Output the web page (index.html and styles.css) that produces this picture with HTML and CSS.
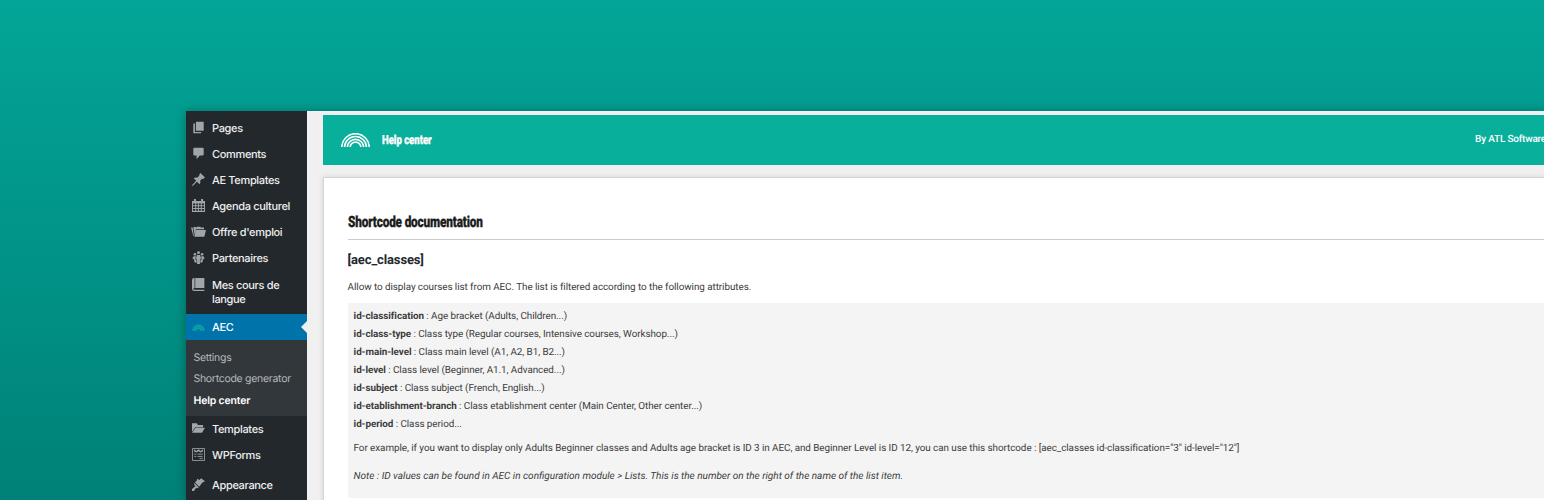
FILE: index.html
```html
<!DOCTYPE html>
<html lang="en">
<head>
<meta charset="utf-8">
<title>Help center</title>
<link rel="stylesheet" href="styles.css">
</head>
<body>
<div class="window">
  <nav class="sidebar">
    <ul class="menu">
      <li class="item"><svg class="icon" viewBox="0 0 20 20"><path d="M6 1h12v14H6zM2 4h2.500v13H14v2H2z"/></svg><span>Pages</span></li>
      <li class="item"><svg class="icon" viewBox="0 0 20 20"><path d="M4 1h12q2 0 2 2v8q0 2-2 2h-4l-5 6v-6H4q-2 0-2-2V3q0-2 2-2z"/></svg><span>Comments</span></li>
      <li class="item"><svg class="icon" viewBox="0 0 20 20"><path d="M11 2.500L13 0l7 7-2.500 2c-.9.200-1.500 0-2-.2l-3 3.200c.8 2.200.4 3.900-1 5.400l-3.800-3.900L1 20l-1-1 6.500-7-3.900-3.800c1.600-1.400 3.400-1.800 5.500-1L11.300 4z"/></svg><span>AE Templates</span></li>
      <li class="item"><svg class="icon" viewBox="0 0 20 20"><path fill-rule="evenodd" d="M0 3h3V0h3v3h8V0h3v3h3v17H0zm1.500 4v2.700H5V7zm5 0v2.700H9.300V7zm4.200 0v2.700h2.800V7zm4.300 0v2.700h3.500V7zm-13.500 4v2.700H5V11zm5 0v2.700H9.300V11zm4.200 0v2.700h2.800V11zm4.300 0v2.700h3.500V11zm-13.500 4.500v2.700H5v-2.700zm5 0v2.700H9.300v-2.700zm4.200 0v2.700h2.800v-2.700zm4.300 0v2.700h3.500v-2.700z"/></svg><span>Agenda culturel</span></li>
      <li class="item"><svg class="icon icon-wide" viewBox="0 0 23 20"><path d="M0 4h2.500l2 13H3.500zM3.500 4L6 2.500 8 4l1.500-1.500H14L15 4h5v2.500H7.500L5.500 15zM7.500 7.500H23L20.500 18H5z"/></svg><span>Offre d'emploi</span></li>
      <li class="item"><svg class="icon" viewBox="0 0 20 20"><circle cx="10" cy="2.500" r="2.300"/><circle cx="4.500" cy="5" r="2"/><circle cx="15.500" cy="5" r="2"/><path d="M7.500 6h5l1.500 6-1.800 1.500V20H7.800v-6.500L6 12zM2.500 8H6L5 12.500l2 1.700V18.500L3.500 17v-3.500L.5 11zM17.500 8H14l1 4.500-2 1.700v4.300l3.500-1.500v-3.500l3-2.500z"/></svg><span>Partenaires</span></li>
      <li class="item item-tall"><svg class="icon" viewBox="0 0 20 20"><path d="M5 0h14v15.500H5zM3 0h1v15.500Q2 15.700 2 17t2 1.200h15V20H3.500Q0 20 0 16.500V3q0-3 3-3z"/></svg><span>Mes cours de<br>langue</span></li>
      <li class="item item-current"><svg class="icon icon-arc" viewBox="0 0 28 14"><path class="arc-soft" d="M3 14a11 11 0 0 1 22 0"/><path class="arc-core" d="M8 14a6 6 0 0 1 12 0"/></svg><span>AEC</span></li>
    </ul>
    <ul class="submenu">
      <li>Settings</li>
      <li>Shortcode generator</li>
      <li class="active">Help center</li>
    </ul>
    <ul class="menu menu-end">
      <li class="item"><svg class="icon" viewBox="0 0 20 20"><path d="M0 2h7.500L9 4.500h8V8H5l-5 7zM5.500 8.700H20l-4.500 7.800H0z"/></svg><span>Templates</span></li>
      <li class="item"><svg class="icon icon-form" viewBox="0 0 20 20"><path class="line" d="M.7.700h18.600v18.600H.7zM3.500 9.500h3M8.500 9.500h8M3.500 13h3M8.500 13h8M11.500 16.300h5"/><path d="M3 2l3.500 2.500L10 2l3.500 2.500L17 2v3l-3.500 2L10 5 6.500 7 3 5z"/></svg><span>WPForms</span></li>
      <li class="item item-gap"><svg class="icon" viewBox="0 0 20 20"><path d="M8 1l3.500 2L14 .5 20 5l-4 2-5 6.500L4.500 6.500 7.500 4zM3.800 7.500l6.500 7-2.200 1.300-1.700-.9L3 20H0v-3l5-4.300-1.800-3.200z"/></svg><span>Appearance</span></li>
    </ul>
  </nav>
  <main class="content">
    <header class="banner">
      <svg class="logo" viewBox="0 0 28 14"><path d="M.7 14a13.300 13.300 0 0 1 26.600 0M3.400 14a10.600 10.600 0 0 1 21.200 0M6.100 14a7.900 7.900 0 0 1 15.800 0M8.800 14a5.200 5.200 0 0 1 10.400 0"/></svg>
      <span class="banner-title"><span>Help center</span></span>
      <span class="credit">By ATL Software</span>
    </header>
    <section class="panel">
      <h1 class="title"><span>Shortcode documentation</span></h1>
      <h2 class="tag">[aec_classes]</h2>
      <p class="intro">Allow to display courses list from AEC. The list is filtered according to the following attributes.</p>
      <div class="doc">
        <ul class="attrs">
          <li><b>id-classification</b> : Age bracket (Adults, Children...)</li>
          <li><b>id-class-type</b> : Class type (Regular courses, Intensive courses, Workshop...)</li>
          <li><b>id-main-level</b> : Class main level (A1, A2, B1, B2...)</li>
          <li><b>id-level</b> : Class level (Beginner, A1.1, Advanced...)</li>
          <li><b>id-subject</b> : Class subject (French, English...)</li>
          <li><b>id-etablishment-branch</b> : Class etablishment center (Main Center, Other center...)</li>
          <li><b>id-period</b> : Class period...</li>
        </ul>
        <p class="example">For example, if you want to display only Adults Beginner classes and Adults age bracket is ID 3 in AEC, and Beginner Level is ID 12, you can use this shortcode : [aec_classes id-classification="3" id-level="12"]</p>
        <p class="note">Note : ID values can be found in AEC in configuration module &gt; Lists. This is the number on the right of the name of the list item.</p>
      </div>
    </section>
  </main>
</div>
</body>
</html>
```
FILE: styles.css
```css
* { box-sizing: border-box; }
html, body { height: 100%; }
body {
  margin: 0;
  overflow: hidden;
  background: linear-gradient(#03a598, #008177);
  font-family: Roboto, sans-serif;
  color: #3c3c3c;
  text-rendering: geometricPrecision;
}
ul, p, h1, h2 { margin: 0; padding: 0; list-style: none; }
.window {
  display: flex;
  height: 389px;
  margin: 111px 0 0 186px;
  background: #f0f0f0;
  box-shadow: 0 0 10px rgba(0, 0, 0, .3);
}
.sidebar {
  flex: none;
  width: 121.400px;
  height: 389px;
  overflow: hidden;
  background: #23282d;
  font: 500 11px/14px Inter, sans-serif;
  letter-spacing: -.34px;
  color: #eee;
}
.menu { padding-top: 4px; }
.item {
  display: flex;
  gap: 7px;
  height: 26.100px;
  padding: 6px 0 0 6px;
  white-space: nowrap;
}
.icon { flex: none; width: 13px; height: 13px; fill: #a0a5aa; }
.icon-wide { width: 15px; margin: 0 -1px; }
.item-tall { height: 42.400px; }
.item-current {
  position: relative;
  height: 26px;
  background: #0073aa;
  color: #fff;
}
.item-current::after {
  content: "";
  position: absolute;
  top: 7px;
  right: 0;
  border: 6px solid transparent;
  border-left: 0;
  border-right-color: #f0f0f0;
}
.icon-arc { height: 7px; margin-top: 4px; fill: none; }
.arc-soft { stroke: #0a9aa6; stroke-width: 6; }
.arc-core { stroke: #0aa39d; stroke-width: 4; }
.submenu {
  height: 76px;
  padding: 7px 0 0 7.500px;
  background: #32373c;
  color: #b4b9be;
  font-size: 10.500px;
  font-weight: 400;
  letter-spacing: -.29px;
  line-height: 21.500px;
}
.submenu .active { color: #fff; font-weight: 600; letter-spacing: -.18px; }
.menu-end { padding-top: 0; }
.item-gap { margin-top: 4px; }
.icon-form .line { fill: none; stroke: #a0a5aa; stroke-width: 1.300; }
.content { flex: 1; min-width: 0; padding: 4px 0 0 15.600px; }
.banner {
  display: flex;
  align-items: center;
  height: 50px;
  padding-left: 18px;
  overflow: hidden;
  background: #08af9b;
  color: #fff;
  white-space: nowrap;
}
.logo { width: 29px; height: 14.500px; fill: none; stroke: #fff; stroke-width: 1.600; }
.banner-title { width: 60px; margin-left: 12px; font-size: 12.500px; font-weight: 900; }
.banner-title span, .title span { display: inline-block; transform: scaleX(.76); transform-origin: left; -webkit-text-stroke: .3px; }
.credit { flex: none; margin: -2px -2px 0 auto; font-size: 10px; font-weight: 500; letter-spacing: -.2px; }
.panel {
  height: 330px;
  margin-top: 12px;
  padding: 31px 0 0 23.600px;
  background: #fff;
  border: 1px solid #d5d5d5;
  border-right: 0;
  box-shadow: 0 0 5px rgba(0, 0, 0, .12);
  font-size: 9.900px;
  letter-spacing: -.065px;
  white-space: nowrap;
}
.title {
  height: 31px;
  border-bottom: 1px solid #ccc;
  font-size: 15.500px;
  font-weight: 900;
  letter-spacing: -.2px;
  line-height: 26px;
  color: #1c1c1c;
}
.tag { margin-top: 11px; font-size: 13px; letter-spacing: -.13px; line-height: 20px; color: #23282d; }
.intro { margin-top: 8.500px; line-height: 16px; }
.doc { height: 195px; margin-top: 7.500px; padding: 4.500px 0 0 6px; background: #f4f4f4; }
.attrs { line-height: 18px; }
.example, .note { margin-top: 6px; line-height: 18px; }
.note { margin-top: 10.500px; font-size: 10px; font-style: italic; letter-spacing: 0; }
```
